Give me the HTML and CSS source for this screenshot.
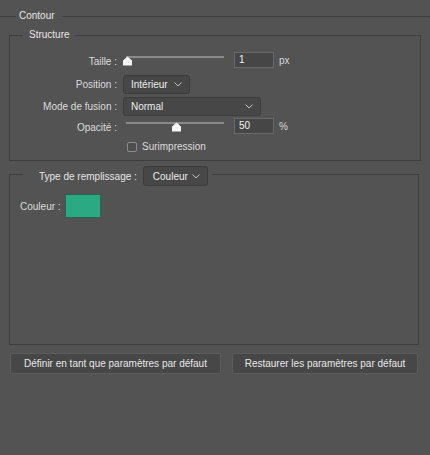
FILE: index.html
```html
<!DOCTYPE html>
<html>
<head>
<meta charset="utf-8">
<link rel="stylesheet" href="styles.css">
</head>
<body>
<div class="page">
  <div class="group-head">
    <span class="line short"></span>
    <span class="group-title">Contour</span>
    <span class="line grow"></span>
  </div>

  <fieldset class="box structure">
    <legend class="legend-text">Structure</legend>
    <div class="rows">
      <div class="row row-slider">
        <span class="label">Taille :</span>
        <div class="ctrl">
          <div class="slider">
            <div class="track"></div>
            <svg class="thumb" style="left:-1px" width="11" height="10" viewBox="0 0 11 10"><path d="M5.5 0.5 L10 4.5 V9.5 H1 V4.5 Z" fill="#f4f4f4"/></svg>
          </div>
          <div class="num">1</div>
          <span class="unit">px</span>
        </div>
      </div>
      <div class="row row-select r2">
        <span class="label">Position :</span>
        <div class="ctrl">
          <div class="select sel-pos"><span>Intérieur</span>
            <svg class="chev" width="8" height="5" viewBox="0 0 8 5"><polyline points="0.5,0.5 4,4 7.5,0.5" fill="none" stroke="#c4c4c4" stroke-width="1"/></svg>
          </div>
        </div>
      </div>
      <div class="row row-select r3">
        <span class="label">Mode de fusion :</span>
        <div class="ctrl">
          <div class="select sel-mode"><span>Normal</span>
            <svg class="chev" width="8" height="5" viewBox="0 0 8 5"><polyline points="0.5,0.5 4,4 7.5,0.5" fill="none" stroke="#c4c4c4" stroke-width="1"/></svg>
          </div>
        </div>
      </div>
      <div class="row row-slider r4">
        <span class="label">Opacité :</span>
        <div class="ctrl">
          <div class="slider">
            <div class="track"></div>
            <svg class="thumb" style="left:48px" width="11" height="10" viewBox="0 0 11 10"><path d="M5.5 0.5 L10 4.5 V9.5 H1 V4.5 Z" fill="#f4f4f4"/></svg>
          </div>
          <div class="num">50</div>
          <span class="unit">%</span>
        </div>
      </div>
      <div class="row row-check r5">
        <span class="label"></span>
        <div class="ctrl">
          <span class="checkbox"></span>
          <span class="check-label">Surimpression</span>
        </div>
      </div>
    </div>
  </fieldset>

  <fieldset class="box fill">
    <legend class="legend-fill">
      <span class="fill-label">Type de remplissage :</span>
      <div class="select sel-fill"><span>Couleur</span>
        <svg class="chev" width="8" height="5" viewBox="0 0 8 5"><polyline points="0.5,0.5 4,4 7.5,0.5" fill="none" stroke="#c4c4c4" stroke-width="1"/></svg>
      </div>
    </legend>
    <div class="fill-body">
      <div class="color-row">
        <span class="color-label">Couleur :</span>
        <span class="swatch"></span>
      </div>
    </div>
  </fieldset>

  <div class="buttons">
    <div class="btn btn-left">Définir en tant que paramètres par défaut</div>
    <div class="btn btn-right">Restaurer les paramètres par défaut</div>
  </div>
</div>
</body>
</html>
```

FILE: styles.css
```css
* { box-sizing: border-box; }
html, body {
  margin: 0;
  padding: 0;
  background: #535353;
}
body {
  width: 430px;
  height: 455px;
  overflow: hidden;
  font-family: "Liberation Sans", Arial, sans-serif;
  font-size: 10px;
  color: #dcdcdc;
}
.page {
  padding: 0 9px 0 9px;
}
.group-head {
  display: flex;
  align-items: center;
  height: 14px;
  margin: 9px -9px 0 -9px;
}
.line {
  height: 1px;
  background: #3e3e3e;
}
.line.short { width: 16px; }
.line.grow { flex: 1; }
.group-title {
  padding: 0 7px 0 3px;
  color: #e6e6e6;
  line-height: 14px;
}
.box {
  margin: 0;
  padding: 0;
  border: 1px solid #3e3e3e;
  min-width: 0;
}
.structure {
  margin-top: 5px;
}
.legend-text {
  margin-left: 13px;
  padding: 0 5px 0 6px;
  line-height: 14px;
  color: #e6e6e6;
}
.rows {
  display: flex;
  flex-direction: column;
  padding: 10px 0 8px 0;
}
.row {
  display: grid;
  grid-template-columns: 107px 1fr;
  column-gap: 6px;
  align-items: center;
}
.label {
  text-align: right;
  white-space: nowrap;
}
.ctrl {
  display: flex;
  align-items: center;
}
.row-slider { height: 16px; }
.row-select { height: 19px; }
.r2 { margin-top: 7px; }
.r3 { margin-top: 3px; }
.r4 { margin-top: 2px; }
.r5 { margin-top: 7px; height: 11px; }
.row-slider .label { position: relative; top: 1px; }

.slider {
  position: relative;
  width: 106px;
  height: 16px;
}
.track {
  position: absolute;
  left: 3px;
  right: 5px;
  top: 4px;
  height: 2px;
  background: #8a8a8a;
}
.thumb {
  position: absolute;
  top: 4px;
  display: block;
}
.num {
  width: 40px;
  height: 16px;
  margin-left: 5px;
  border: 1px solid #6a6a6a;
  background: #464646;
  color: #f2f2f2;
  padding-left: 4px;
  line-height: 14px;
}
.unit {
  margin-left: 5px;
  color: #d8d8d8;
}

.select {
  display: flex;
  align-items: center;
  justify-content: space-between;
  height: 19px;
  border: 1px solid #3c3c3c;
  border-radius: 3px;
  background: #474747;
  color: #ececec;
  padding: 0 7px 0 7px;
}
.chev { display: block; }
.sel-pos { width: 67px; }
.sel-mode { width: 138px; }
.sel-fill { width: 65px; height: 20px; padding-left: 9px; }

.checkbox {
  display: inline-block;
  width: 10px;
  height: 10px;
  margin-left: 4px;
  border: 1px solid #8c8c8c;
  border-radius: 2px;
  background: #4e4e4e;
}
.check-label {
  margin-left: 5px;
}

.fill {
  margin-top: 1px;
  margin-right: 2px;
}
.legend-fill {
  display: flex;
  align-items: center;
  margin-left: 13px;
  padding: 4px 4px 0 16px;
}
.fill-label {
  margin-right: 6px;
  color: #e6e6e6;
}
.fill-body {
  height: 158px;
  padding: 8px 0 0 10px;
}
.color-row {
  display: flex;
  align-items: center;
}
.color-label {
  margin-right: 4px;
}
.swatch {
  width: 36px;
  height: 24px;
  background: #2aa983;
  border: 1px solid #27654f;
}

.buttons {
  display: flex;
  gap: 11px;
  margin: 8px 2px 0 1px;
}
.btn {
  height: 21px;
  line-height: 19px;
  border: 1px solid #5c5c5c;
  border-radius: 2px;
  background: #474747;
  color: #e8e8e8;
  text-align: center;
  white-space: nowrap;
}
.btn-left { width: 211px; }
.btn-right { width: 186px; }
```
